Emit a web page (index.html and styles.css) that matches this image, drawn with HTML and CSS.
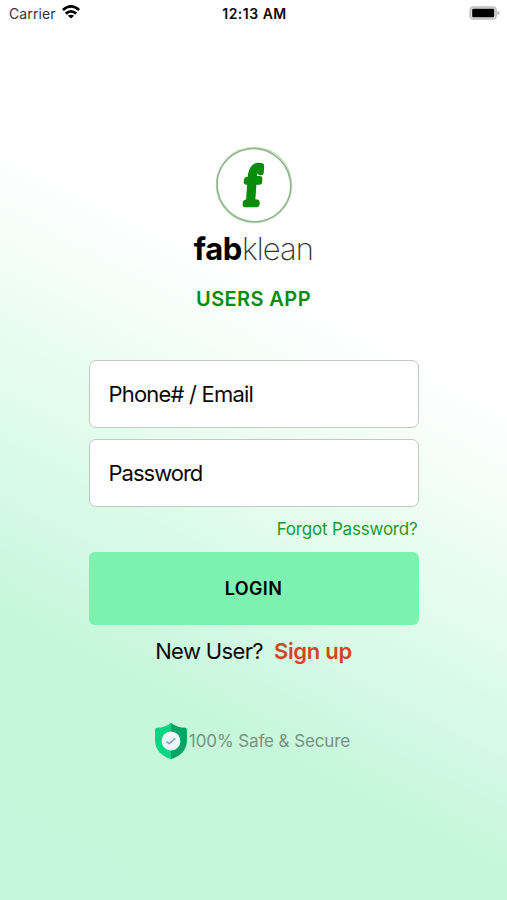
FILE: index.html
```html
<!DOCTYPE html>
<html lang="en">
<head>
<meta charset="utf-8">
<title>fabklean</title>
<link rel="stylesheet" href="styles.css">
</head>
<body>
<div class="screen">
  <header class="status">
    <div class="carrier"><span>Carrier</span>
      <svg class="wifi" width="18" height="14" viewBox="0 0 18 14" fill="none" stroke="#000" stroke-width="2.7"><path d="M.9 5.1Q9-2.2 17.1 5.1M3.8 8.6q5.2-4.4 10.4 0"/><path d="M9 13.6 5.9 10.8q3.1-2.2 6.2 0z" fill="#000" stroke="none"/></svg>
    </div>
    <div class="time">12:13 AM</div>
    <svg class="battery" width="32" height="14" viewBox="0 0 32 14"><rect x="1.2" y=".9" width="26" height="12.2" rx="3.4" fill="#ddd" stroke="#bdbdbd" stroke-width="1.5"/><rect x="3.2" y="2.7" width="22" height="8.6" rx="1.3"/><path d="M28.6 4.7q2 .7 2 2.3t-2 2.3z" fill="#aaa"/></svg>
  </header>
  <main class="login">
    <svg class="mark" width="78" height="78" viewBox="0 0 78 78" fill="none"><circle cx="39" cy="39" r="37.3" stroke="#c5dcbf" stroke-width="2"/><ellipse cx="39" cy="39.2" rx="37.1" ry="36.2" stroke="#8eb58c" stroke-width="1.5" transform="rotate(35 39 39)"/><text class="letter" transform="translate(36.2 57.6) skewX(-4) scale(.85 1)" text-anchor="middle">f</text></svg>
    <h1 class="brand"><b>fab</b><span>klean</span></h1>
    <h2 class="subtitle">USERS APP</h2>
    <div class="field"><span class="phone">Phone# / Email</span></div>
    <div class="field"><span class="pass">Password</span></div>
    <a class="forgot">Forgot Password?</a>
    <button class="submit">LOGIN</button>
    <p class="signup"><span>New User?</span><b>Sign up</b></p>
    <div class="secure">
      <svg width="32" height="38" viewBox="0 0 32 38"><path d="M16 .8Q10 5.8 1.7 5.8Q0 6 0 8v10q0 14 16 19.2z" fill="#06d584"/><path d="M16 .8q6 5 14.3 5Q32 6 32 8v10q0 14-16 19.2z" fill="#07a565"/><circle cx="16" cy="19" r="9.4" fill="#eef5fb"/><path d="m11.5 19.6 2.6 2 6.2-5.2" fill="none" stroke="#83a9b5" stroke-width="1.7"/></svg>
      <span>100% Safe &amp; Secure</span>
    </div>
  </main>
</div>
</body>
</html>
```
FILE: styles.css
```css
* { box-sizing: border-box; }
body { margin: 0; font-family: Inter, "Liberation Sans", sans-serif; color: #0a0a0a; }
.screen { width: 507px; height: 900px; overflow: hidden; background: linear-gradient(207.4deg, #fff 35%, #fafefc 39%, #e4fcee 54%, #cdf8e0 70%, #c6f7da 75%, #c6f7dc 100%); }
.status { height: 28px; display: grid; grid-template-columns: 1fr auto 1fr; align-items: center; padding: 0 6px 2px 9px; }
.carrier { display: flex; align-items: center; gap: 6px; font-size: 14px; color: #333; }
.carrier span { letter-spacing: .1px; }
.wifi { margin-top: -2px; }
.time { font-size: 14px; font-weight: 600; letter-spacing: .5px; margin-left: -1px; }
.battery { justify-self: end; }
.login { width: 330px; margin: 118px auto 0; display: flex; flex-direction: column; align-items: center; }
.mark { display: block; }
.letter { font: 54px "Liberation Serif", serif; fill: #078c0b; stroke: #078c0b; stroke-width: 6.5px; stroke-linejoin: round; }
.brand { margin: 6px 0 0; font-size: 31px; line-height: 38px; font-weight: 200; display: flex; letter-spacing: -.8px; color: #000; }
.brand b { font-weight: 700; letter-spacing: -.4px; }
.brand span { color: #333; letter-spacing: -.9px; }
.subtitle { margin: 19px 0 0; font-size: 20px; line-height: 24px; font-weight: 600; letter-spacing: .4px; color: #078c0b; }
.field { width: 330px; height: 68px; padding: 0 19px 1px; border: 1px solid #c3c8c4; border-radius: 7px; background: #fff; display: flex; align-items: center; font-size: 22px; letter-spacing: -.8px; }
.pass { letter-spacing: -1px; }
.subtitle + .field { margin-top: 49px; }
.field + .field { margin-top: 11px; }
.forgot { align-self: flex-end; margin: 12px 1px 0 0; font-size: 17px; line-height: 20px; letter-spacing: -.2px; color: #22992a; }
.submit { margin-top: 13px; width: 330px; height: 73px; border: 0; border-radius: 6px; background: #7df2b0; font: 600 18px/22px Inter, sans-serif; letter-spacing: .35px; color: #000; padding: 0; }
.signup { margin: 12px 0 0; display: flex; gap: 11px; font-size: 22px; line-height: 28px; letter-spacing: -.65px; }
.signup b { font-weight: 600; letter-spacing: -.3px; color: #d64427; }
.secure { margin: 57px 2px 0 0; display: flex; align-items: center; gap: 2px; font-size: 17px; letter-spacing: -.1px; color: #789182; }
```
